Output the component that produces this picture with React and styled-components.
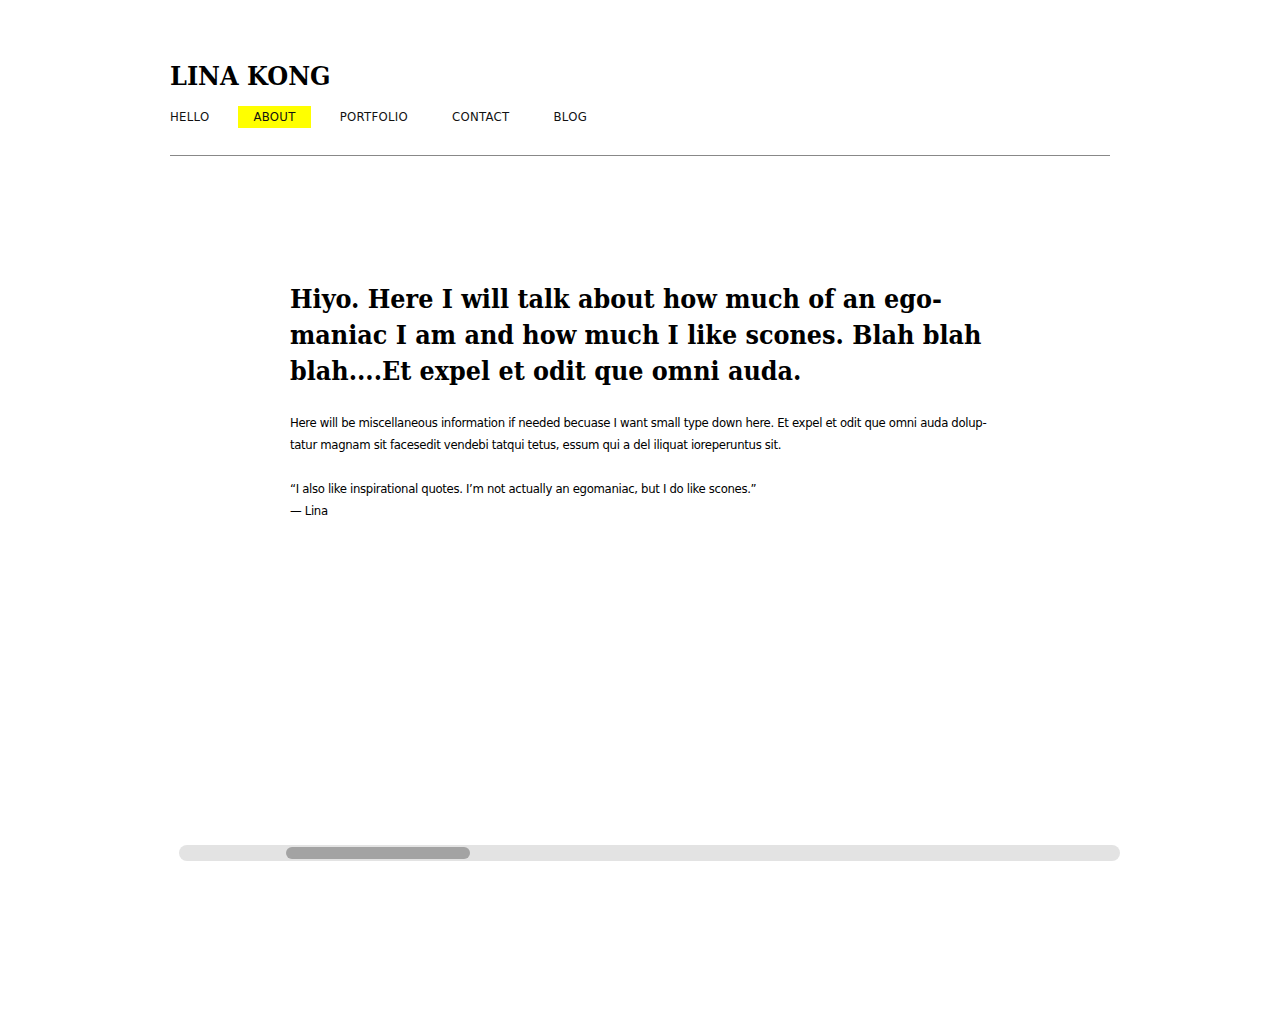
import React from 'react';
import styled, { createGlobalStyle } from 'styled-components';

const GlobalStyle = createGlobalStyle`
    html, body {
        margin: 0;
        padding: 0;
        background: #fff;
        color: #000;
    }
`;

const navItems = ['HELLO', 'ABOUT', 'PORTFOLIO', 'CONTACT', 'BLOG'];

export default function App() {
    const active = 'ABOUT';

    return (
        <>
            <GlobalStyle />
            <Page>
                <Header>
                    <Logo>LINA KONG</Logo>
                    <Nav>
                        { navItems.map((item) => (
                            <NavItem key={ item } $active={ item === active }>{ item }</NavItem>
                        )) }
                    </Nav>
                </Header>

                <About>
                    <Lead>
                        Hiyo. Here I will talk about how much of an ego-<br />
                        maniac I am and how much I like scones. Blah blah<br />
                        blah....Et expel et odit que omni auda.
                    </Lead>
                    <Small>
                        Here will be miscellaneous information if needed becuase I want small type down here. Et expel et odit que omni auda dolup-<br />
                        tatur magnam sit facesedit vendebi tatqui tetus, essum qui a del iliquat ioreperuntus sit.
                    </Small>
                    <Small>
                        “I also like inspirational quotes. I’m not actually an egomaniac, but I do like scones.”<br />
                        — Lina
                    </Small>
                </About>

                <ScrollTrack>
                    <ScrollThumb style={ { marginLeft: 107, width: 184 } } />
                </ScrollTrack>
            </Page>
        </>
    );
}

const Page = styled.div`
    width: 940px;
    margin: 0 auto;
    padding-top: 58px;
`;

const Header = styled.header`
    border-bottom: 1px solid #888;
    padding-bottom: 27px;
`;

const Logo = styled.h1`
    margin: 0;
    font-family: "DejaVu Serif Condensed", "DejaVu Serif", serif;
    font-stretch: condensed;
    font-weight: bold;
    font-size: 26.7px;
    line-height: 36px;
`;

const Nav = styled.nav`
    display: flex;
    gap: 14px;
    margin-top: 12px;
`;

const NavItem = styled.a`
    display: block;
    padding: 0 15px;
    height: 22px;
    line-height: 22px;
    font-family: "DejaVu Sans Condensed", "DejaVu Sans", sans-serif;
    font-stretch: condensed;
    font-size: 13px;
    letter-spacing: 0.3px;
    color: #111;
    background: ${ (p) => (p.$active ? '#ffff00' : 'transparent') };
    cursor: pointer;

    &:first-child {
        padding-left: 0;
    }
`;

const About = styled.section`
    width: 720px;
    margin: 0 0 0 120px;
    padding-top: 125px;
    height: 689px;
    box-sizing: border-box;
`;

const Lead = styled.h2`
    margin: 0 0 23px;
    font-family: "DejaVu Serif Condensed", "DejaVu Serif", serif;
    font-stretch: condensed;
    font-weight: bold;
    font-size: 26.6px;
    line-height: 36px;
    white-space: nowrap;
`;

const Small = styled.p`
    margin: 0 0 22px;
    font-family: "DejaVu Sans Condensed", "DejaVu Sans", sans-serif;
    font-stretch: condensed;
    font-size: 13px;
    letter-spacing: -0.33px;
    line-height: 22px;
    white-space: nowrap;
`;

const ScrollTrack = styled.div`
    display: flex;
    align-items: center;
    margin-left: 9px;
    width: 941px;
    height: 16px;
    border-radius: 8px;
    background: #e3e3e3;
`;

const ScrollThumb = styled.div`
    height: 12px;
    border-radius: 6px;
    background: #a3a3a3;
`;
